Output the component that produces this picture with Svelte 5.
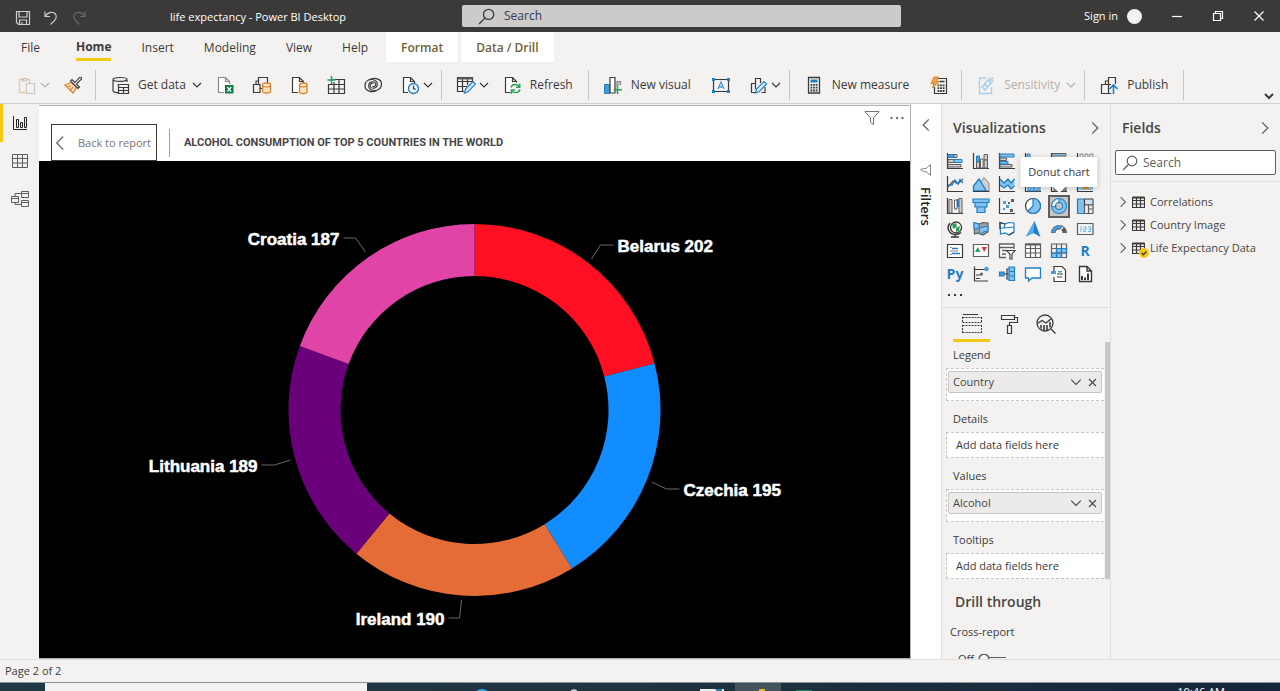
<script>
  const K = '#3b3a39', G = '#8a8886', B = '#1f7fc4', L = '#83c1ee', O = '#d9822b', GR = '#2e9e5b';

  const line = (d, c = K, w = 1, fill = 'none') =>
    `<path d="${d}" fill="${fill}" stroke="${c}" stroke-width="${w}"/>`;
  const fill = (d, c) => `<path d="${d}" fill="${c}"/>`;

  const tools = {
    paste: line('M7.500 4.500H2.500V17.500H9M12.500 8V4.500H10', '#ecc9a4', 1.4) + line('M5.500 3.500H9.500V6H5.500Z', '#c0bebc', 1) + line('M9.500 8.500H17.500V18.500H9.500Z', '#c8c6c4', 1.200, '#f3f2f1'),
    painter: line('M2 10L8.500 7.500L13.500 12.500L10 18Z', O, 1.300, '#fbe3c6') + line('M5 12L8 10.500M7.500 15L10 12', O, 1.200) + line('M7.500 6L15 13.500L16.500 12L13.500 9L18.500 4C18.800 2.500 17.500 2 16.500 2.500L12 7.500L9 4.500Z', K, 1.100, '#f3f2f1'),
    data: line('M17 7V4.500C17 1.800 3 1.800 3 4.500V15.500C3 17 5.500 17.600 8 17.700M3 4.700C4 6.800 15 7 16.500 4.800', K, 1.200) + line('M8.500 9.500H18.500V18.500H8.500ZM8.500 12.500H18.500M13.500 12.500V18.500M8.500 15.500H18.500', K, 1.200, '#f3f2f1'),
    excel: line('M9 17.500H3.500V2.500H10.500L14.500 6.500V9M10.500 2.500V6.500H14.500', G, 1.200, '#fff') + fill('M10 10H18.500V18.500H10Z', '#107c41') + line('M12.300 12L16.200 16.700M16.200 12L12.300 16.700', '#fff', 1.200),
    hub: line('M6.500 9V2.500H15.500V8', K, 1.200) + line('M1.500 9.500H8V17.500H1.500ZM8 13.500H10M6.500 6H4V9', K, 1.200) + cyl(10.5, 9.5, 8, 8),
    sql: line('M9 17.500H3.500V2.500H10.500L14.500 6.500V8M10.500 2.500V6.500H14.500', K, 1.200, '#fff') + cyl(10.5, 9.5, 7.5, 8.500),
    enter: line('M5 4.500H18.500V18.500H2.500V9M2.500 9.500H18.500M2.500 14H18.500M8 7V18.500M13 4.500V18.500', K, 1.200) + line('M5.500 1V9M1.500 5H9.500', GR, 1.500),
    dataverse: line('M13.500 15.500C9 18 2 16.500 2 10.500C2 6 6 4 9.500 4.500C14 5 15 8.500 14 11C13 13.500 9 14 7.500 12C6.500 10 8 7.500 10.500 8.500', K, 1.200) + line('M6 5C11 2 18.500 3.500 18.500 9C18.500 14 14 16 10.500 15.500C6 15 5 11.500 6 9C7 6.500 11 6 12.500 8C13.500 10 12 12 9.500 11.500', K, 1.200),
    recent: line('M8 17.500H3.500V2.500H10.500L14.500 6.500V8M10.500 2.500V6.500H14.500', K, 1.200, '#fff') + `<circle cx="13.500" cy="13.500" r="5" fill="#eff7fd" stroke="${B}" stroke-width="1.300"/>` + line('M13.500 10.500V14H16', K, 1.200),
    transform: line('M16.500 7V2.500H1.500V16.500H8M1.500 6.500H16M1.500 11.500H11M6.500 3V16M11.500 3V10', K, 1.200) + line('M1.500 3.500H16.500', '#605e5c', 2) + line('M8.500 18L9.500 14L17 6.500L19.500 9L12 16.800Z', B, 1.200, '#d6ebfa'),
    refresh: line('M8 17.500H3.500V2.500H10.500L14.500 6.500V7.500M10.500 2.500V6.500H14.500', K, 1.200, '#fff') + line('M9 12.500C10 8.500 16 8.500 17.500 12M17.800 8.500V12.300H14M18 14.500C17 18.500 11 18.500 9.500 15.500M9.200 19V15H13', GR, 1.400),
    visual: fill('M1.500 9H7V18.500H1.500Z', '#4a9bdc') + line('M1.500 9.500H6.500V18.500H1.500Z', B, 1) + line('M7 2.500H12V18H7Z', K, 1.200, '#fff') + line('M14 11V6.500H17.500V10', G, 1.200, '#c8c6c4') + line('M14.500 10.500V19M10.500 14.700H19', GR, 1.600),
    textbox: line('M2.500 4.500H17.500V16.500H2.500Z', K, 1.200) + fill('M1 3H4V6H1ZM16 3H19V6H16ZM1 15H4V18H1ZM16 15H19V18H16Z', B) + line('M7 14L10 7L13 14M8 12H12', '#4a9bdc', 1.300),
    shapes: line('M8 17.500H3.500V8.500H7M7.500 14V3.500H12.500V8M17 12V17.500H13.500', K, 1.200) + line('M7.500 18L8.500 14L16 6.500L18.500 9L11 16.800Z', B, 1.200, '#d6ebfa'),
    calc: line('M4.500 2.500H15.500V18H4.500Z', K, 1.300) + fill('M6.500 4.500H13.500V7.500H6.500Z', B) + dots(6.5, 9),
    quick: line('M8.500 3.500H17.500V18.500H5.500V12', K, 1.200) + dots(8.5, 9.5) + line('M10.500 6.500H15.500', K, 1.500) + line('M5 2H9.500L7.500 6.500H10L3.500 13L5 8.500H2Z', O, 1, '#f2a14c'),
    sensitivity: line('M10 3H3.500V18.500H15.500V12', '#a9d0ea', 1.300) + line('M6 12L12 5L15 8L9 15ZM12 5L14.500 2.500M15 8L17.500 5.500M13.500 6.500L17.500 2.500M8.500 9L12 12', '#a9cfe8', 1.500),
    publish: line('M6.500 9V6H9.500M9.500 9V2.500H16.500V9', K, 1.200) + line('M2.500 9.500H9.500V18.500H2.500ZM9.500 18.500H12', K, 1.200) + line('M9.500 9.500H12', K, 1.200) + line('M14.500 19V10.500M10.500 14L14.500 10L18.500 14', B, 1.600),
  };

  function cyl(x, y, w, h) {
    return line(`M${x} ${y}C${x} ${y - 2} ${x + w} ${y - 2} ${x + w} ${y}V${y + h - 1}C${x + w} ${y + h + 1} ${x} ${y + h + 1} ${x} ${y + h - 1}ZM${x} ${y + 0.5}C${x} ${y + 3} ${x + w} ${y + 3} ${x + w} ${y + 0.5}`, O, 1.300, '#fbe3c6');
  }
  function dots(x, y) {
    let d = '';
    for (let r = 0; r < 3; r++) for (let c = 0; c < 3; c++) d += `M${x + c * 2.6} ${y + r * 2.8}h1.800v1.800h-1.800Z`;
    return fill(d, K);
  }

  const axis = line('M1.500 1V16.500H17', K, 1.200);
  const visuals = [
    ['Stacked bar chart', axis + line('M2 2.500H8V5.500H2Z', B, 1, '#4a9bdc') + line('M8 2.500H11V5.500H8ZM2 7.500H8V10.500H2Z', '#605e5c', 1, '#d2d0ce') + line('M8 7.500H16V10.500H8Z', B, 1, L) + line('M2 12.500H15V15H2Z', '#605e5c', 1, '#d2d0ce')],
    ['Stacked column chart', axis + line('M4.500 4H7.500V10H4.500Z', B, 1, '#4a9bdc') + line('M4.500 10H7.500V16H4.500ZM12 2.500H15.500V8H12Z', '#605e5c', 1, '#d2d0ce') + line('M8.500 7H11V16H8.500Z', '#605e5c', 1, '#fff') + line('M12 8H15.500V16H12Z', '#605e5c', 1, '#c8c6c4')],
    ['Clustered bar chart', axis + line('M2 2H16V5H2Z', B, 1, L) + line('M2 6H8.500V8.500H2ZM2 12.500H14V15H2Z', '#605e5c', 1, '#d2d0ce') + line('M2 9.500H10V12H2Z', B, 1, L)],
    ['Clustered column chart', axis + line('M3 2H6V16H3Z', B, 1, L)],
    ['100% stacked bar chart', axis + line('M2 1.500H16V4H2Z', '#605e5c', 1, L)],
    ['100% stacked column chart', axis + line('M4 2H7V16H4ZM9 2H12V16H9ZM14 2H17V16H14Z', G, 1)],
    ['Line chart', axis + line('M2 12L7 6L12 9L17 4', '#605e5c', 1.300) + line('M2 10L6 10L9 5L12 9L14 4.500L17 8', B, 1.300)],
    ['Area chart', line('M8 8L12 2.500L17 8V16H8Z', G, 1, '#d2d0ce') + line('M1.500 16V11L7 4L14 15.500V16Z', B, 1.300, L) + line('M1 16.500H17.500')],
    ['Stacked area chart', axis + fill('M2 4L6 8L10 4L13 8L16.500 4V11L13 14L10 10L6 13L2 10Z', L) + line('M2 4L6 8L10 4L13 8L16.500 4M2 10L6 13L10 10L13 14L16.500 11', B, 1.300)],
    ['Line and stacked column chart', axis + line('M4 6H7V16H4ZM9 10H11V16H9ZM13 9H16V16H13Z', B, 1, L)],
    ['Line and clustered column chart', axis + line('M4 6H7V16H4ZM13 6H16V16H13Z', '#605e5c', 1, '#8a8886')],
    ['Ribbon chart', axis + fill('M2 11H17V15H2Z', L) + line('M6 13H13', O, 2)],
    ['Waterfall chart', axis + line('M3 2.500H6V16H3ZM13 1.500H16V16H13Z', '#605e5c', 1, '#d2d0ce') + line('M8.500 3H11V12H8.500Z', '#605e5c', 1, '#fff') + fill('M11 2H13V10H11Z', B)],
    ['Funnel chart', line('M1 2H17V5.500H1ZM3 5.500H15V10H3ZM5 10H13V15.500H5Z', B, 1.200, L)],
    ['Scatter chart', axis + fill('M5 4h3v3h-3ZM8 8h3v3h-3ZM5 11h2v2h-2Z', '#4a9bdc') + fill('M13 2h3v3h-3ZM12 12h3v3h-3ZM10 5h2v2h-2Z', '#605e5c')],
    ['Pie chart', `<circle cx="9" cy="9" r="7.500" fill="#fff" stroke="${K}" stroke-width="1.200"/>` + line('M9 1.500A7.500 7.500 0 1 1 3.500 14.200L9 9Z', B, 1.200, L)],
    ['Donut chart', `<circle cx="9" cy="9" r="5.500" fill="none" stroke="#1f7fc4" stroke-width="5"/><circle cx="9" cy="9" r="5.500" fill="none" stroke="#83c1ee" stroke-width="3"/>` + line('M3.500 9A5.500 5.500 0 0 1 9 3.500', '#fff', 2.500) + line('M9 1V6M1.500 9.500H6.500', B, 1.200), true],
    ['Treemap', line('M1.500 2H8.500V16.500H1.500Z', B, 1.200, L) + line('M8.500 2H17V8H8.500Z', K, 1, '#c7e3f7') + line('M8.500 8H12.500V16.500H8.500ZM12.500 8H17V12H12.500ZM12.500 12H17V16.500H12.500Z', '#605e5c', 1.200, '#eee')],
    ['Map', `<circle cx="10" cy="7.500" r="5.500" fill="#fff" stroke="${K}" stroke-width="1.300"/>` + fill('M6 4L10 3L11 7L7 9ZM10 8L14 6L13 11L10 12Z', GR) + line('M4 3C0 8 3 14 9 14.500C12 14.500 14 13.500 15 12.500M9 14.500V17M5 17H13', K, 1.500)],
    ['Filled map', line('M2 2.500L7 4L11 2.500L16 3V12L11 15L7 13L2.500 14Z', '#605e5c', 1.200, '#a19f9d') + line('M2 2.500L7 4V8L2 9ZM7 8L16 6V11L11 12L8 15Z', B, 1, L)],
    ['Shape map', line('M2 2.500L7 4L11 2.500L16 3V12L11 15L7 13L2.500 14ZM7 4L6 8H2M6 8L16 7', B, 1.200, '#fff') + line('M2 9V2.500L7 4M11 15L16 12', K, 1.200)],
    ['Azure map', fill('M10.500 1L16.500 17L9.500 13L2 16.500Z', '#1f7fc4') + fill('M10.500 1L9.500 13L2 16.500Z', '#54aeea')],
    ['Gauge', fill('M1 13A8 8 0 0 1 17 13H12.500A3.500 3.500 0 0 0 5.500 13Z', '#605e5c') + fill('M2 12.500A7 7 0 0 1 12 6L10.500 9A3.500 3.500 0 0 0 5 12.500Z', '#4a9bdc') + line('M8.500 13L13 7', '#fff', 1.200)],
    ['Card', line('M1.500 3.500H17V14.500H1.500Z', '#605e5c', 1.200) + line('M5 6.500V12M7.500 7H10V9.300H7.800V11.500H10.200M12 7H14.500V11.500H12M12.500 9.300H14.500', '#6cb4ea', 1)],
    ['Multi-row card', line('M1.500 2.500H16.500V15.500H1.500Z', K, 1.200, '#fff') + line('M6 6.500H12M6 11.500H14', B, 1.600) + line('M4 5.500H6M4 9H12M4 12.500H6', G, 1)],
    ['KPI', line('M1.500 2.500H16.500V14.500H1.500Z', '#605e5c', 1.200, '#fff') + fill('M3 10L5.700 5L8.500 10Z', GR) + fill('M9.500 5H15L12.200 10Z', '#e0393e')],
    ['Slicer', line('M16 7V2H1.500V15.500H8M1.500 5.500H16M4 8.500H9M4 12H8', '#605e5c', 1.300, '#fff') + line('M8.500 8.500H17L14 12V17H12V12Z', K, 1.100, '#fff')],
    ['Table', line('M1.500 2H16.500V15.500H1.500ZM1.500 6.500H16.500M1.500 11H16.500M6.500 2V15.500M11.500 2V15.500', '#605e5c', 1.200, '#fff') + line('M1.500 2.500H16.500', '#605e5c', 2)],
    ['Matrix', fill('M1.500 11H12V15.500H1.500ZM6.500 6.500H16.500V11H6.500Z', L) + line('M1.500 2H16.500V15.500H1.500ZM1.500 6.500H16.500M1.500 11H16.500M6.500 2V15.500M11.500 2V15.500', '#605e5c', 1.200) + line('M6.500 6.500H16.500V11H6.500ZM1.500 11H11.500V15.500H1.500ZM6.500 11V15.500M11.500 6.500V11', B, 1.200)],
    ['R script visual', '', false, 'R'],
    ['Python visual', '', false, 'Py'],
    ['Key influencers', line('M2.500 1.500V16.500M2 4.500H13M4 10H9M4 13.500H8M2 16H16', K, 1.200) + `<circle cx="14.500" cy="4" r="2.300" fill="#4a9bdc"/><circle cx="9.500" cy="9" r="1.500" fill="#605e5c"/>`],
    ['Decomposition tree', line('M6 9H9V4H12M9 9V14H12M9 9H12', K, 1.200) + line('M1.500 7H6V11H1.500Z', B, 1.200, '#4a9bdc') + line('M11 2H16.500V15.500H11ZM11 6.500H16.500M11 11H16.500', B, 1.200, L)],
    ['Q&A', line('M1.500 3H16.500V13H8L4.500 16V13H1.500Z', B, 1.300, '#fff')],
    ['Smart narrative', line('M4 6V1.500H12L15.500 5V16.500H4V12', K, 1.200, '#fff') + line('M7 9H13M7 12H12', K, 1) + fill('M1 6H6V9H1ZM8 6H12V7.500H8Z', '#4a9bdc')],
    ['Paginated report', line('M3.500 1.500H11L15.500 6V16.500H3.500ZM11 1.500V6H15.500', K, 1.400, '#fff') + fill('M5 11H7V15H5ZM8 12.500H10V15H8ZM11 8.500H13V15H11Z', K)],
  ];

  const tabs = ['Home', 'Insert', 'Modeling', 'View', 'Help'];

  const groups = [
    [{ icon: 'paste', name: 'Paste', menu: true, off: true }, { icon: 'painter', name: 'Format painter' }],
    [
      { icon: 'data', label: 'Get data', menu: true },
      { icon: 'excel', name: 'Excel workbook' },
      { icon: 'hub', name: 'Data hub' },
      { icon: 'sql', name: 'SQL Server' },
      { icon: 'enter', name: 'Enter data' },
      { icon: 'dataverse', name: 'Dataverse' },
      { icon: 'recent', name: 'Recent sources', menu: true },
    ],
    [{ icon: 'transform', name: 'Transform data', menu: true }, { icon: 'refresh', label: 'Refresh' }],
    [{ icon: 'visual', label: 'New visual' }, { icon: 'textbox', name: 'Text box' }, { icon: 'shapes', name: 'Shapes', menu: true }],
    [{ icon: 'calc', label: 'New measure' }, { icon: 'quick', name: 'Quick measure' }],
    [{ icon: 'sensitivity', label: 'Sensitivity', menu: true, off: true }],
    [{ icon: 'publish', label: 'Publish' }],
  ];

  const wells = [
    { title: 'Legend', field: 'Country' },
    { title: 'Details' },
    { title: 'Values', field: 'Alcohol' },
    { title: 'Tooltips' },
  ];

  const tables = [{ name: 'Correlations' }, { name: 'Country Image' }, { name: 'Life Expectancy Data', used: true }];

  const countries = [
    { name: 'Belarus', value: 202, color: '#ff0f22', x: 578, y: 91, anchor: 'start', leader: 'M552 98L561 84L574 84' },
    { name: 'Czechia', value: 195, color: '#118dff', x: 644, y: 335, anchor: 'start', leader: 'M612 321L627 328L640 328' },
    { name: 'Ireland', value: 190, color: '#e66c37', x: 405, y: 464, anchor: 'end', leader: 'M409 457L420 457L422 439' },
    { name: 'Lithuania', value: 189, color: '#6b007b', x: 218, y: 311, anchor: 'end', leader: 'M222 304L235 304L251 299' },
    { name: 'Croatia', value: 187, color: '#e044a7', x: 300, y: 84, anchor: 'end', leader: 'M304 77L316 77L326 91' },
  ];
  const cx = 435, cy = 249, R = 186, r = 134;
  const total = countries.reduce((s, c) => s + c.value, 0);
  let turned = 0;
  const slices = countries.map((c) => {
    const a = (turned / total) * 2 * Math.PI;
    turned += c.value;
    const b = (turned / total) * 2 * Math.PI;
    const p = (rad, t) => `${cx + rad * Math.sin(t)} ${cy - rad * Math.cos(t)}`;
    return { ...c, d: `M${p(R, a)}A${R} ${R} 0 0 1 ${p(R, b)}L${p(r, b)}A${r} ${r} 0 0 0 ${p(r, a)}Z` };
  });
</script>

{#snippet chevron(dir, size = 10)}
  <svg class="chev {dir}" width={size} height={size} viewBox="0 0 10 10" aria-hidden="true"><path d="M1 3L5 7L9 3" /></svg>
{/snippet}

{#snippet lens(size)}
  <svg width={size} height={size} viewBox="0 0 16 16" fill="none" stroke="currentColor" stroke-width="1.200" aria-hidden="true">
    <circle cx="10" cy="6" r="4.800" /><path d="M6.500 9.500L1 15" />
  </svg>
{/snippet}

{#snippet grid()}
  <svg width="16" height="16" viewBox="0 0 16 16" fill="none" stroke="currentColor" aria-hidden="true">
    <path d="M.5 1.500H15.500V14.500H.5ZM.5 5.500H15.500M.5 10H15.500M5.500 2V14.500M10.500 2V14.500" />
  </svg>
{/snippet}

<div class="app">
  <header class="titlebar">
    <div class="quick">
      <button aria-label="Save"><svg width="16" height="16" viewBox="0 0 16 16"><path d="M1.500 1.500H14.500V14.500H3.500L1.500 12.500ZM4 1.500V7H12V1.500M4.500 14.500V10H11.500V14.500M7 12V14.500" /></svg></button>
      <button aria-label="Undo"><svg width="16" height="16" viewBox="0 0 16 16"><path d="M2 1.500V6.500H7M2.300 6.200C5 2 10 1 12.500 4C14.500 7 13 9.500 7.500 14.500" /></svg></button>
      <button aria-label="Redo" disabled><svg width="16" height="16" viewBox="0 0 16 16"><path d="M14 1.500V6.500H9M13.700 6.200C11 2 6 1 3.500 4C1.500 7 3 9.500 8.500 14.500" /></svg></button>
    </div>
    <h1>life expectancy - Power BI Desktop</h1>
    <label class="find">{@render lens(17)}<input type="search" placeholder="Search" aria-label="Search commands" /></label>
    <div class="account">
      <button class="signin">Sign in <span class="avatar"></span></button>
      <button aria-label="Minimize"><svg width="12" height="12" viewBox="0 0 12 12"><path d="M1 6.500H11" /></svg></button>
      <button aria-label="Restore"><svg width="12" height="12" viewBox="0 0 12 12"><path d="M1.500 3.500H8.500V10.500H1.500ZM3.500 3V1.500H10.500V8.500H9" /></svg></button>
      <button aria-label="Close"><svg width="12" height="12" viewBox="0 0 12 12"><path d="M1.500 1.500L10.500 10.500M10.500 1.500L1.500 10.500" /></svg></button>
    </div>
  </header>

  <nav class="tabs" aria-label="Ribbon tabs">
    <button class="file">File</button>
    {#each tabs as t}<button class:active={t === 'Home'}><span>{t}</span></button>{/each}
    <button class="context">Format</button>
    <button class="context">Data / Drill</button>
  </nav>

  <div class="ribbon">
    {#each groups as g}
      <div class="group">
        {#each g as t}
          <button class="tool" class:text={t.label && !t.menu} class:menu={t.menu} class:labelled={t.label} disabled={t.off} aria-label={t.label ?? t.name}>
            <svg width="20" height="20" viewBox="0 0 20 20" aria-hidden="true">{@html tools[t.icon]}</svg>
            {#if t.label}<span>{t.label}</span>{/if}
            {#if t.menu}{@render chevron('down')}{/if}
          </button>
        {/each}
      </div>
    {/each}
    <button class="collapse" aria-label="Collapse ribbon">{@render chevron('down')}</button>
  </div>

  <main>
    <nav class="views" aria-label="Views">
      <button class="current" aria-label="Report"><svg width="16" height="16" viewBox="0 0 16 16" fill="none" stroke="currentColor"><path d="M1.500 1V14.500H15M4.500 4.500H6.500V12.500H4.500ZM8.500 7.500H10.500V12.500H8.500ZM12.500 2.500H14.500V12.500H12.500Z" /></svg></button>
      <button aria-label="Data">{@render grid()}</button>
      <button aria-label="Model"><svg width="18" height="18" viewBox="0 0 18 18" fill="none" stroke="currentColor"><path d="M.5 6.500H7.500V12.500H.5ZM.5 8.500H7.500M10.500 1.500H17.500V7.500H10.500ZM10.500 3.500H17.500M10.500 10.500H17.500V16.500H10.500ZM10.500 12.500H17.500M4 6.500V3.500H10.500M4 12.500V14.500H10.500" /></svg></button>
    </nav>

    <section class="report">
      <div class="focusbar">
        <button class="back">{@render chevron('left', 16)}<span>Back to report</span></button>
        <h2>ALCOHOL CONSUMPTION OF TOP 5 COUNTRIES IN THE WORLD</h2>
        <div class="actions">
          <button aria-label="Filters on this visual"><svg width="16" height="16" viewBox="0 0 16 16" fill="none" stroke="currentColor"><path d="M1 1.500H15L9.500 8V14.500L6.500 12.500V8Z" /></svg></button>
          <button aria-label="More options"><svg width="14" height="4" viewBox="0 0 14 4" fill="currentColor"><circle cx="1.500" cy="2" r="1.200" /><circle cx="7" cy="2" r="1.200" /><circle cx="12.500" cy="2" r="1.200" /></svg></button>
        </div>
      </div>
      <svg class="chart" viewBox="0 0 870 497" role="img" aria-label="Alcohol consumption by country">
        {#each slices as s}
          <path d={s.d} fill={s.color} />
          <path class="leader" d={s.leader} />
          <text x={s.x} y={s.y} text-anchor={s.anchor}>{s.name} {s.value}</text>
        {/each}
      </svg>
    </section>

    <aside class="filters">
      <button aria-label="Expand filters">{@render chevron('left', 14)}</button>
      <svg width="14" height="14" viewBox="0 0 14 14" fill="none" stroke="#8a8886" aria-hidden="true"><path d="M11.500 1.500V12.500L7 8.500H4.500L1.500 6.500L4.500 5.500H7Z" /></svg>
      <h2>Filters</h2>
    </aside>

    <aside class="viz">
      <div class="head"><h2>Visualizations</h2><button aria-label="Collapse Visualizations">{@render chevron('right', 14)}</button></div>
      <div class="gallery">
        {#each visuals as [name, art, on, glyph]}
          <button class:on aria-label={name}>
            {#if glyph}<b>{glyph}</b>{:else}<svg width="18" height="18" viewBox="0 0 18 18" aria-hidden="true">{@html art}</svg>{/if}
            {#if on}<span class="tip">{name}</span>{/if}
          </button>
        {/each}
      </div>
      <button class="more" aria-label="Get more visuals"><svg width="16" height="4" viewBox="0 0 16 4" fill="#3b3a39"><path d="M1 1h2v2H1ZM7 1h2v2H7ZM13 1h2v2h-2Z" /></svg></button>
      <div class="modes">
        <button class="current" aria-label="Fields"><svg width="22" height="22" viewBox="0 0 22 22" fill="none" stroke="#3b3a39"><path d="M2 1.500H17" /><path stroke-dasharray="2 1" d="M1.500 4.500H20.500M1.500 9.500H20.500M1.500 12.500H20.500M1.500 19.500H20.500M1.500 4V10M20.500 4V10M1.500 12V20M20.500 12V20" /></svg></button>
        <button aria-label="Format"><svg width="22" height="22" viewBox="0 0 22 22" fill="none" stroke="#3b3a39" stroke-width="1.200"><path d="M3.500 2.500H16.500V6.500H3.500ZM16.500 4.500H19.500V9.500H11.500V12M9.500 12.500H13.500V20.500H9.500Z" /></svg></button>
        <button aria-label="Analytics"><svg width="22" height="22" viewBox="0 0 22 22" fill="none" stroke="#3b3a39" stroke-width="1.300"><circle cx="10" cy="10" r="8" /><path d="M2.500 10.500L7 7.500L11 10L16.500 5.500M16 16L20.500 20.500" /><path stroke-width="1.600" d="M6 12V15.500M9 12V17.500M12 12V17M15 9V14.500" /></svg></button>
      </div>
      <div class="wells">
        {#each wells as w}
          <h3>{w.title}</h3>
          <div class="well">
            {#if w.field}
              <div class="chip">
                <span>{w.field}</span>
                <button aria-label="{w.field} options">{@render chevron('down', 12)}</button>
                <button aria-label="Remove {w.field}"><svg width="9" height="9" viewBox="0 0 9 9" fill="none" stroke="currentColor" stroke-width="1.100"><path d="M1 1L8 8M8 1L1 8" /></svg></button>
              </div>
            {:else}<p>Add data fields here</p>{/if}
          </div>
        {/each}
        <h2>Drill through</h2>
        <p class="cross" id="cross">Cross-report</p>
        <label class="switch">Off <input type="checkbox" role="switch" aria-labelledby="cross" aria-checked="false" /></label>
        <div class="thumb"></div>
      </div>
    </aside>

    <aside class="fields">
      <div class="head"><h2>Fields</h2><button aria-label="Collapse Fields">{@render chevron('right', 14)}</button></div>
      <label class="search">{@render lens(16)}<input type="search" placeholder="Search" aria-label="Search fields" /></label>
      <ul>
        {#each tables as t}
          <li>
            <button>
              {@render chevron('right', 12)}
              <span class="table">
                <svg width="13" height="13" viewBox="0 0 13 13" fill="none" stroke="#3b3a39"><path stroke-width="1.200" d="M.5 1.500H12.500V11.500H.5ZM.5 4.500H12.500M.5 8H12.500M4.500 1.500V11.500M8.500 1.500V11.500" /><path d="M.5 1.500H12.500" stroke-width="2" /></svg>
                {#if t.used}<svg class="tick" width="10" height="10" viewBox="0 0 10 10"><circle cx="5" cy="5" r="5" fill="#f2c811" /><path d="M2.500 5L4.300 6.800L7.500 3.500" fill="none" stroke="#3b3a39" stroke-width="1.300" /></svg>{/if}
              </span>
              {t.name}
            </button>
          </li>
        {/each}
      </ul>
    </aside>
  </main>

  <footer class="status">Page 2 of 2</footer>

  <div class="taskbar">
    <span class="start"></span>
    <span class="box"></span>
    <div class="apps">
      <span><svg width="18" height="18" viewBox="0 0 18 18"><circle cx="9" cy="9" r="9" fill="#2aa9e0" /></svg></span>
      <span></span>
      <span><svg width="18" height="18" viewBox="0 0 18 18" fill="none" stroke="#dfe5e8" stroke-width="1.500"><circle cx="9" cy="4" r="3" /></svg></span>
      <span></span>
      <span></span>
      <span><svg width="24" height="18" viewBox="0 0 24 18"><path d="M0 0H24V18H0Z" fill="#e8edf0" /><path d="M15 0H22V8Z" fill="#2a7fa5" /></svg></span>
      <span class="running"><svg width="18" height="18" viewBox="0 0 18 18"><path d="M10 0H16V18H10Z" fill="#e3b52c" /></svg></span>
      <span><svg width="18" height="18" viewBox="0 0 18 18"><path d="M1 1H17V18H1Z" fill="#178a5f" /></svg></span>
    </div>
    <time>10:46 AM</time>
  </div>
</div>

<style>
  :global(body) { margin: 0; }
  .app {
    height: 100vh; display: flex; flex-direction: column; overflow: hidden;
    font: 12px/16px "Open Sans", "Noto Sans", sans-serif; color: #3b3a39; background: #f3f2f1;
  }
  h1, h2, h3, p, ul { margin: 0; padding: 0; font-weight: 400; }
  ul { list-style: none; }
  button { font: inherit; color: inherit; background: none; border: 0; padding: 0; margin: 0; display: inline-flex; align-items: center; justify-content: center; }
  input { font: inherit; color: inherit; background: none; border: 0; padding: 0; outline: 0; min-width: 0; width: 100%; flex: 1; }
  svg { display: block; flex: none; }
  .chev { fill: none; stroke: currentColor; stroke-width: 1.200; }
  .left { transform: rotate(90deg); }
  .right { transform: rotate(-90deg); }
  .left, .right { stroke-width: 0.900; color: #605e5c; }

  .titlebar { flex: 0 0 32px; display: grid; grid-template-columns: 170px minmax(0, 292fr) minmax(0, 439fr) minmax(0, 379fr); align-items: center; background: #3b3a39; color: #fff; }
  .titlebar button svg { fill: none; stroke: currentColor; stroke-width: 1.200; }
  .titlebar h1 { font-size: 11px; white-space: nowrap; padding-top: 2px; }
  .quick { display: flex; gap: 12px; padding: 4px 0 0 15px; color: #d2d0ce; }
  .quick button:disabled { color: #6b6967; }
  .find { display: flex; align-items: center; gap: 9px; height: 22px; padding: 0 16px; background: #cdcbc9; color: #3b3a39; border-radius: 2px; }
  .find input::placeholder { color: #323a55; opacity: 1; }
  .account { display: flex; justify-content: flex-end; align-items: center; gap: 29px; padding-right: 15px; font-size: 11px; }
  .signin { gap: 9px; }
  .avatar { width: 15px; height: 15px; border-radius: 50%; background: #f3f2f1; }

  .tabs { flex: 0 0 30px; display: flex; padding-left: 6px; font-size: 12px; }
  .tabs button { padding: 2px 15px 0; }
  .tabs .file { margin-right: 6px; }
  .tabs .active { font-weight: 700; }
  .tabs .active span { line-height: 22px; border-bottom: 3px solid #f2c811; margin-top: 1px; }
  .tabs .context { background: #fff; color: #6f6238; font-weight: 600; margin-left: 3px; }

  .ribbon { flex: 0 0 42px; box-sizing: border-box; display: flex; align-items: center; padding: 4px 6px 0 3px; border-bottom: 1px solid #d2d0ce; }
  .group { display: flex; gap: 1px; height: 30px; padding: 0 4px 0 6px; border-right: 1px solid #c8c6c4; }
  .tool { padding: 0 8px; white-space: nowrap; }
  .tool span { margin-left: 8px; }
  .tool.text { padding-right: 11px; }
  .tool.menu { padding-right: 4px; }
  .tool.menu .chev { margin-left: 3px; }
  .tool.labelled .chev { margin-left: 6px; }
  .tool:disabled { color: #b3b0ad; }
  .collapse { margin-left: auto; align-self: flex-end; padding-bottom: 2px; }
  .collapse .chev { stroke-width: 2; }

  main { flex: 1; min-height: 0; display: flex; }
  .views { flex: 0 0 39px; display: flex; flex-direction: column; color: #605e5c; }
  .views button { height: 38px; border-left: 3px solid transparent; padding-right: 3px; }
  .views .current { border-left-color: #f2c811; color: #252423; }

  .report { flex: 1; min-width: 0; display: flex; flex-direction: column; background: #fff; border: 1px solid #b3b0ad; border-width: 1px 1px 1px 0; margin-top: 1px; }
  .focusbar { flex: 0 0 55px; display: flex; align-items: flex-end; padding-left: 12px; }
  .back { height: 37px; border: 1px solid #3b3a39; color: #767472; padding: 0 5px 0 0; gap: 10px; font-size: 11px; }
  .back .chev { color: #767472; }
  .focusbar h2 { font: 700 11px/28px Roboto, sans-serif; color: #484644; border-left: 1px solid #a19f9d; margin: 0 0 4px 12px; padding-left: 14px; white-space: nowrap; }
  .actions { margin-left: auto; align-self: flex-start; display: flex; gap: 10px; padding: 4px 6px 0 0; color: #767472; }
  .chart { flex: 1; min-height: 0; width: 100%; background: #000; }
  .chart text { font: 700 17px "Liberation Sans", Arial, sans-serif; fill: #fff; stroke: #fff; stroke-width: 0.500; }
  .leader { fill: none; stroke: #6a6a6a; }

  .filters { flex: 0 0 31px; display: flex; flex-direction: column; align-items: center; background: #fff; padding-top: 14px; box-sizing: border-box; border-right: 1px solid #e1dfdd; }
  .filters > svg { margin-top: 31px; }
  .filters h2 { writing-mode: vertical-rl; font-size: 13px; font-weight: 600; margin-top: 10px; color: #252423; }

  .viz { flex: 0 0 169px; display: flex; flex-direction: column; border-right: 1px solid #e1dfdd; box-sizing: border-box; min-height: 0; }
  .head { flex: 0 0 46px; display: flex; align-items: center; justify-content: space-between; padding: 2px 8px 0 11px; box-sizing: border-box; }
  .head h2 { font-size: 14px; font-weight: 600; color: #484644; }
  .gallery { flex: 0 0 135px; display: grid; grid-template: repeat(6, 1fr) / repeat(6, 26px); }
  .gallery button { position: relative; }
  .gallery b { color: #1f7fc4; font-size: 14px; }
  .gallery .on { background: #c8c6c4; box-shadow: inset 0 0 0 2px #605e5c; margin: 0 2px; }
  .tip { position: absolute; left: 50%; bottom: 31px; transform: translateX(-50%); padding: 7px 8px; background: #fff; border-radius: 2px; font-size: 11px; white-space: nowrap; box-shadow: 0 1px 5px #0003; z-index: 1; }
  .tip::after { content: ""; position: absolute; left: 50%; top: 100%; margin-left: -6px; border: 6px solid transparent; border-top-color: #fff; border-bottom: 0; }
  .more { align-self: flex-start; height: 22px; padding: 0 0 3px 5px; }
  .modes { flex: 0 0 35px; box-sizing: border-box; display: flex; border-top: 1px solid #e1dfdd; padding-left: 11px; }
  .modes button { width: 37px; border-bottom: 3px solid transparent; }
  .modes .current { border-bottom-color: #f2c811; }

  .wells { flex: 1; min-height: 0; overflow: hidden; position: relative; padding: 0 6px 0 4px; font-size: 11px; }
  .wells h3 { font-size: 11px; line-height: 26px; padding-left: 7px; }
  .well + h3 { margin-top: 5px; }
  .well { background: #fff; border: 1px dashed #c8c6c4; border-right: 0; padding: 2px 2px 7px 1px; }
  .well p { line-height: 24px; padding-left: 8px; margin: -2px 0 -7px; }
  .chip { display: flex; align-items: center; gap: 6px; height: 20px; padding: 0 4px; background: #edebe9; border: 1px solid #c8c6c4; border-radius: 2px; color: #484644; }
  .chip span { flex: 1; }
  .chip .chev { stroke-width: 0.900; }
  .wells h2 { font-size: 14px; line-height: 22px; font-weight: 600; padding: 12px 0 0 9px; color: #484644; }
  .cross { line-height: 22px; padding-left: 4px; margin-top: 8px; }
  .switch { display: flex; align-items: center; gap: 4px; height: 22px; padding-left: 12px; margin-top: 5px; }
  .switch input { appearance: none; flex: none; width: 28px; height: 10px; margin: 0; background: radial-gradient(circle at 6px 5px, #f3f2f1 4px, #605e5c 4px 5px, transparent 6px), linear-gradient(#605e5c, #605e5c) 10px 3px / 18px 1px no-repeat; }
  .thumb { position: absolute; right: 0; top: 0; width: 5px; height: 237px; background: #c8c6c4; }

  .fields { flex: 0 0 169px; min-width: 0; display: flex; flex-direction: column; }
  .search { display: flex; align-items: center; gap: 5px; height: 23px; margin: 0 4px; padding: 0 6px; background: #fff; border: 1px solid #605e5c; border-radius: 2px; color: #605e5c; }
  .search input::placeholder { color: #605e5c; opacity: 1; }
  .fields ul { border-top: 1px solid #e1dfdd; margin-top: 6px; padding-top: 9px; font-size: 11px; }
  .fields li { height: 22px; display: flex; padding-left: 6px; margin-bottom: 1px; color: #484644; }
  .fields li button { white-space: nowrap; }
  .table { position: relative; margin: 0 5px 0 3px; }
  .tick { position: absolute; left: 7px; top: 6px; }

  .status { flex: 0 0 23px; box-sizing: border-box; border-top: 1px solid #e1dfdd; padding: 3px 5px; font-size: 11px; }
  .taskbar { flex: 0 0 9px; overflow: hidden; display: flex; background: linear-gradient(90deg, #1f3a45, #203340 50%, #14253c); border-top: 1px solid #8a9499; box-sizing: border-box; }
  .start { flex: 0 0 45px; }
  .box { flex: 0 0 322px; background: #f3f2f1; }
  .apps { display: flex; margin-left: 92px; }
  .apps span { width: 46px; height: 40px; display: flex; justify-content: center; padding-top: 6px; box-sizing: border-box; }
  .apps .running { background: #44545e; }
  time { margin-left: auto; padding: 2px 55px 0 0; color: #fff; font-size: 11px; line-height: 14px; }
</style>
